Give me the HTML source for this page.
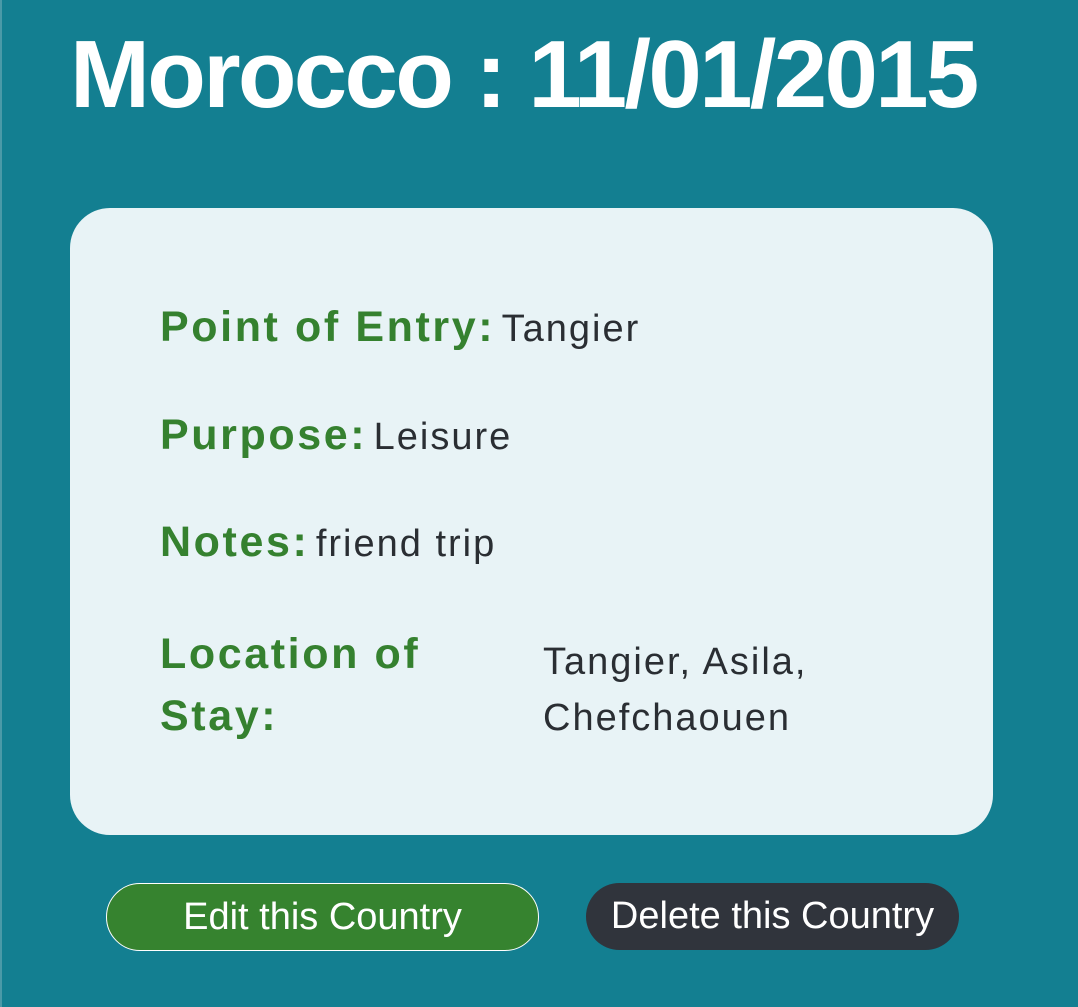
<!DOCTYPE html>
<html><head><style>
html,body{margin:0;padding:0;}
body{width:1078px;height:1007px;background:#137f91;position:relative;overflow:hidden;font-family:"Liberation Sans",sans-serif;}
.edge{position:absolute;left:0;top:0;width:2px;height:1007px;background:#4a9aa8;}
h1{position:absolute;left:70px;top:15px;margin:0;color:#fff;font-size:96px;font-weight:bold;letter-spacing:-2.7px;line-height:120px;white-space:nowrap;}
.card{position:absolute;left:70px;top:208px;width:923px;height:627px;background:#e8f3f6;border-radius:40px;}
.row{position:absolute;left:90px;white-space:nowrap;}
.lab{color:#35812f;font-weight:bold;font-size:43px;letter-spacing:2.6px;}
.val{color:#2a2e33;font-size:38px;letter-spacing:2px;margin-left:2px;}
.btn{position:absolute;color:#fff;font-size:38px;text-align:center;box-sizing:border-box;border-radius:34px;}
</style></head><body>
<div class="edge"></div>
<h1>Morocco : 11/01/2015</h1>
<div class="card">
<div class="row" style="top:95px"><span class="lab">Point of Entry:</span> <span class="val">Tangier</span></div>
<div class="row" style="top:203px"><span class="lab">Purpose:</span> <span class="val">Leisure</span></div>
<div class="row" style="top:310px"><span class="lab">Notes:</span> <span class="val">friend trip</span></div>
<div class="row lab" style="top:415px;line-height:62px;">Location of<br>Stay:</div>
<div class="row val" style="left:471px;top:426px;line-height:56px;">Tangier, Asila,<br>Chefchaouen</div>
</div>
<div class="btn" style="left:106px;top:883px;width:433px;height:68px;line-height:66px;background:#36832f;border:1.5px solid #fff;">Edit this Country</div>
<div class="btn" style="left:586px;top:883px;width:373px;height:67px;line-height:67px;background:#30343c;">Delete this Country</div>
</body></html>
